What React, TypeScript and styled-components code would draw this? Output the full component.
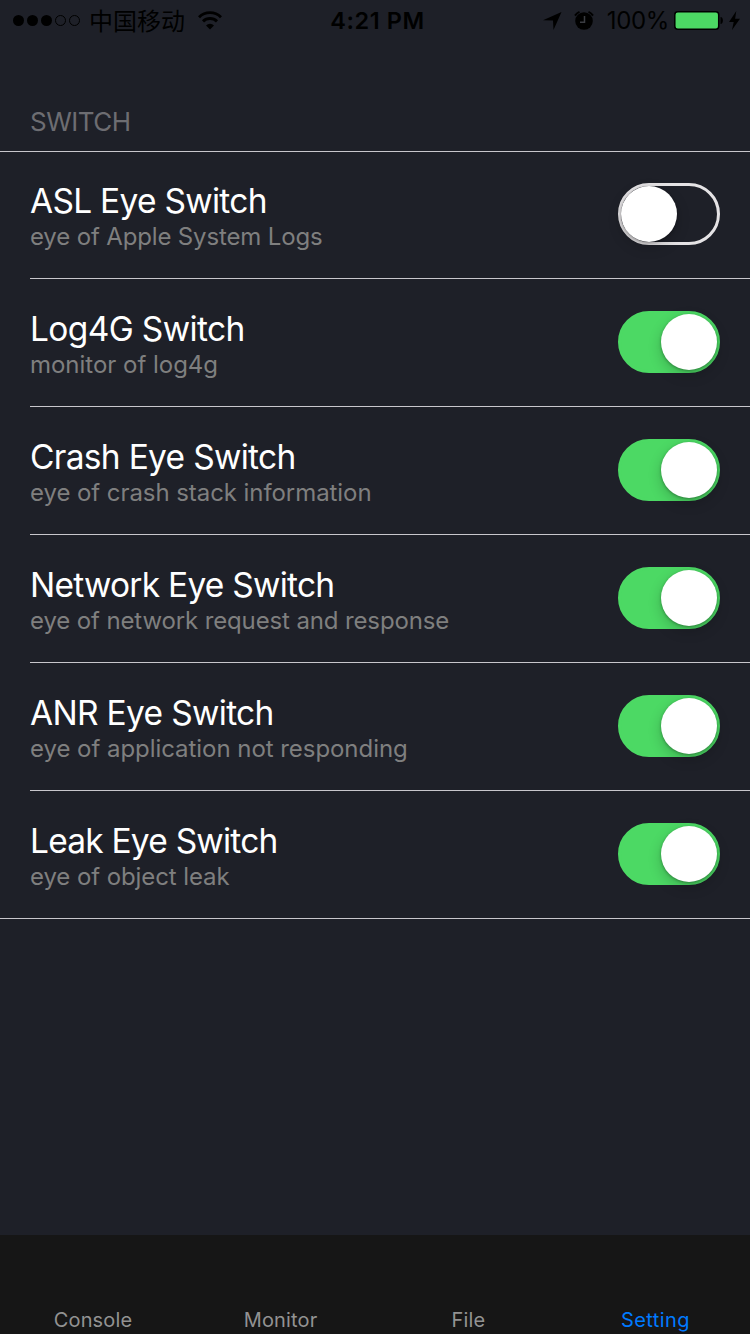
import React from "react";
import styled, { createGlobalStyle } from "styled-components";

const GlobalStyle = createGlobalStyle`
  body {
    margin: 0;
    background: #1e2028;
    font-family: Inter, "Liberation Sans", "Noto Sans CJK SC", sans-serif;
  }
`;

const Screen = styled.div`
  display: flex;
  flex-direction: column;
  width: 750px;
  height: 1334px;
  overflow: hidden;
  background: #1e2028;
`;

const StatusBar = styled.header`
  display: grid;
  grid-template-columns: 1fr auto 1fr;
  align-items: start;
  height: 41px;
  padding: 0 10px 0 13px;
  color: #000;
  line-height: 41px;
  white-space: nowrap;
`;

const StatusLeft = styled.div`
  display: flex;
  align-items: center;
  height: 41px;
`;

const StatusRight = styled(StatusLeft)`
  justify-content: flex-end;
`;

const Signal = styled.svg`
  display: block;
  margin-right: 9px;
`;

const Carrier = styled.span`
  font-family: "Noto Sans CJK SC", sans-serif;
  font-size: 24px;
  line-height: 40px;
  margin: 0 13px 1px 0;
`;

const Time = styled.time`
  font-size: 23.5px;
  font-weight: 600;
  letter-spacing: 0.6px;
  padding-left: 2px;
`;

const Percent = styled.span`
  font-size: 24px;
  letter-spacing: -0.35px;
  margin: 0 5px 0 13px;
`;

const SectionTitle = styled.h2`
  margin: 0;
  height: 110px;
  padding: 63px 30px 0;
  box-sizing: border-box;
  font-size: 26px;
  font-weight: 400;
  line-height: 36px;
  letter-spacing: -0.5px;
  color: #6d6d72;
`;

const List = styled.ul`
  list-style: none;
  margin: 0;
  padding: 0;
  border-bottom: 1px solid #c8c7cc;
  box-shadow: inset 0 1px #c8c7cc;
`;

const Row = styled.li`
  display: flex;
  justify-content: space-between;
  box-sizing: border-box;
  height: 128px;
  margin-left: 30px;
  padding: 32px 30px 0 0;
  border-bottom: 1px solid #c8c7cc;

  &:last-child {
    height: 127px;
    border-bottom: 0;
  }
`;

const RowText = styled.div`
  display: flex;
  flex-direction: column;
  white-space: nowrap;
`;

const RowTitle = styled.span<{ $tracking: number }>`
  font-size: 33.5px;
  line-height: 36px;
  margin-bottom: 2px;
  letter-spacing: ${({ $tracking }) => $tracking}px;
  color: #fff;
`;

const RowDetail = styled.span<{ $tracking: number }>`
  font-size: 24px;
  line-height: 32px;
  letter-spacing: ${({ $tracking }) => $tracking}px;
  color: #7f7f7f;
`;

const Toggle = styled.button<{ $on: boolean }>`
  display: flex;
  flex: none;
  align-items: center;
  justify-content: ${({ $on }) => ($on ? "flex-end" : "flex-start")};
  box-sizing: border-box;
  width: 102px;
  height: 62px;
  padding: 0;
  border: 3px solid ${({ $on }) => ($on ? "#4cd964" : "#e5e3e5")};
  border-radius: 31px;
  background: ${({ $on }) => ($on ? "#4cd964" : "transparent")};
`;

const Knob = styled.span`
  width: 56px;
  height: 56px;
  border-radius: 50%;
  background: #fff;
  box-shadow: 0 5px 14px rgba(0, 0, 0, 0.2), 0 1px 3px rgba(0, 0, 0, 0.3);
`;

const TabBar = styled.nav`
  display: grid;
  grid-template-columns: 186px 189px 187px 187px;
  align-items: end;
  box-sizing: border-box;
  height: 99px;
  margin-top: auto;
  background: #161616;
`;

const Tab = styled.a<{ $active: boolean }>`
  font-size: 20px;
  line-height: 28px;
  letter-spacing: ${({ $active }) => ($active ? 0.4 : 0.15)}px;
  text-align: center;
  color: ${({ $active }) => ($active ? "#007aff" : "#929292")};
`;

const rows = [
  { title: "ASL Eye Switch", detail: "eye of Apple System Logs", on: false, tt: -0.72, dt: -0.15 },
  { title: "Log4G Switch", detail: "monitor of log4g", on: true, tt: -0.63, dt: -0.02 },
  { title: "Crash Eye Switch", detail: "eye of crash stack information", on: true, tt: -0.69, dt: -0.07 },
  { title: "Network Eye Switch", detail: "eye of network request and response", on: true, tt: -0.75, dt: -0.13 },
  { title: "ANR Eye Switch", detail: "eye of application not responding", on: true, tt: -0.68, dt: -0.05 },
  { title: "Leak Eye Switch", detail: "eye of object leak", on: true, tt: -0.78, dt: -0.09 },
];

const tabs = ["Console", "Monitor", "File", "Setting"];

const SignalDots = () => (
  <Signal width="67" height="11" viewBox="0 0 67 11">
    {[5.5, 19.5, 33.5].map((x) => (
      <circle key={x} cx={x} cy="5.5" r="5.5" />
    ))}
    {[47.5, 61.5].map((x) => (
      <circle key={x} cx={x} cy="5.5" r="5" fill="none" stroke="#000" strokeWidth="1" />
    ))}
  </Signal>
);

const WifiIcon = () => (
  <svg width="24" height="19" viewBox="0 0 24 19" fill="none" stroke="#000" strokeWidth="2.9">
    <path d="M1 6.2a15.6 15.6 0 0 1 22 0" />
    <path d="M5 10.4a9.9 9.9 0 0 1 14 0" />
    <path d="M12 18.4l-4-4a5.7 5.7 0 0 1 8 0z" fill="#000" stroke="none" />
  </svg>
);

const LocationIcon = () => (
  <svg width="19" height="19" viewBox="0 -1 19 19">
    <path d="M18.5 0L10.5 18L10 8.6L0 8.2Z" />
  </svg>
);

const AlarmIcon = () => (
  <svg width="20" height="19" viewBox="0 0 20 19">
    <circle cx="10" cy="10" r="8.8" />
    <path d="M1 4.6a10 10 0 0 1 4.5-3.7M14.5.9a10 10 0 0 1 4.5 3.7" fill="none" stroke="#000" strokeWidth="2" />
    <path d="M10.5 5v6.2H6" fill="none" stroke="#3a3c42" strokeWidth="1.5" />
  </svg>
);

const BatteryIcon = () => (
  <svg width="49" height="19" viewBox="0 0 49 19">
    <rect x="0.8" y="0.75" width="43.9" height="17.5" rx="3" fill="#4cd964" stroke="#000" strokeWidth="1.5" />
    <path d="M46.5 6c3.2 0 3.2 7 0 7z" />
  </svg>
);

const BoltIcon = () => (
  <svg width="11" height="19" viewBox="0 0 11 19">
    <path d="M7.3 0L0 10.9h4.7L3 19L11 7.7H6.1Z" />
  </svg>
);

const Glyphs = styled.div`
  display: flex;
  align-items: center;
  gap: 12px;
`;

const Power = styled.div`
  display: flex;
  align-items: center;
  gap: 6px;
`;

export default function App() {
  return (
    <>
      <GlobalStyle />
      <Screen>
        <StatusBar>
          <StatusLeft>
            <SignalDots />
            <Carrier>中国移动</Carrier>
            <WifiIcon />
          </StatusLeft>
          <Time>4:21 PM</Time>
          <StatusRight>
            <Glyphs>
              <LocationIcon />
              <AlarmIcon />
            </Glyphs>
            <Percent>100%</Percent>
            <Power>
              <BatteryIcon />
              <BoltIcon />
            </Power>
          </StatusRight>
        </StatusBar>
        <SectionTitle>SWITCH</SectionTitle>
        <List>
          {rows.map((row) => (
            <Row key={row.title}>
              <RowText>
                <RowTitle $tracking={row.tt}>{row.title}</RowTitle>
                <RowDetail $tracking={row.dt}>{row.detail}</RowDetail>
              </RowText>
              <Toggle $on={row.on} role="switch" aria-checked={row.on} aria-label={row.title}>
                <Knob />
              </Toggle>
            </Row>
          ))}
        </List>
        <TabBar>
          {tabs.map((tab) => (
            <Tab key={tab} $active={tab === "Setting"}>
              {tab}
            </Tab>
          ))}
        </TabBar>
      </Screen>
    </>
  );
}
